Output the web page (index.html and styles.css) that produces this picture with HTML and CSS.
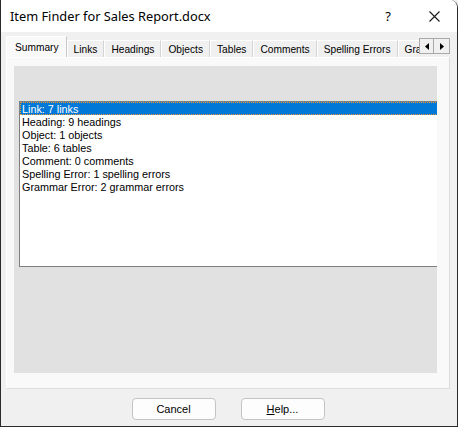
FILE: index.html
```html
<!DOCTYPE html>
<html>
<head>
<meta charset="utf-8">
<link rel="stylesheet" href="styles.css">
</head>
<body>
<div class="window">
  <div class="titlebar">
    <span class="title">Item Finder for Sales Report.docx</span>
    <span class="help-q">?</span>
    <span class="close"><svg width="11" height="11" viewBox="0 0 11 11"><path d="M0.5 0.5 L10.5 10.5 M10.5 0.5 L0.5 10.5" stroke="#1a1a1a" stroke-width="1.1" fill="none"/></svg></span>
  </div>
  <div class="client">
    <div class="tabstrip">
      <div class="tab selected">Summary</div>
      <div class="tab">Links</div>
      <div class="tab">Headings</div>
      <div class="tab">Objects</div>
      <div class="tab">Tables</div>
      <div class="tab">Comments</div>
      <div class="tab">Spelling Errors</div>
      <div class="tab">Grammar Errors</div>
      <div class="scroller">
        <div class="arrow"><svg width="4" height="7" viewBox="0 0 4 7"><path d="M4 0 L0 3.5 L4 7 Z" fill="#000"/></svg></div>
        <div class="arrow"><svg width="4" height="7" viewBox="0 0 4 7"><path d="M0 0 L4 3.5 L0 7 Z" fill="#000"/></svg></div>
      </div>
    </div>
    <div class="page">
      <div class="inner">
        <div class="listbox">
          <div class="row selected">Link: 7 links</div>
          <div class="row">Heading: 9 headings</div>
          <div class="row">Object: 1 objects</div>
          <div class="row">Table: 6 tables</div>
          <div class="row">Comment: 0 comments</div>
          <div class="row">Spelling Error: 1 spelling errors</div>
          <div class="row">Grammar Error: 2 grammar errors</div>
        </div>
      </div>
    </div>
    <div class="buttons">
      <button class="btn">Cancel</button>
      <button class="btn"><u>H</u>elp...</button>
    </div>
  </div>
</div>
</body>
</html>
```
FILE: styles.css
```css
html, body {
  margin: 0;
  padding: 0;
  background: #f0f0f0;
}
.window {
  width: 458px;
  height: 427px;
  box-sizing: border-box;
  border-left: 1px solid #2b2b2b;
  border-right: 1px solid #2b2b2b;
  border-bottom: 1px solid #2b2b2b;
  border-top-right-radius: 8px;
  background: #f0f0f0;
  display: flex;
  flex-direction: column;
  overflow: hidden;
}
.titlebar {
  height: 32px;
  flex: none;
  background: #ffffff;
  display: flex;
  align-items: center;
  font-family: "Noto Sans", sans-serif;
  font-size: 12.8px;
  color: #000;
}
.title {
  padding-left: 9px;
  flex: 1;
}
.help-q {
  width: 20px;
  text-align: center;
  margin-right: 31px;
  font-size: 13px;
}
.close {
  display: flex;
  margin-right: 17px;
}
.client {
  flex: 1;
  display: flex;
  flex-direction: column;
  padding: 4px 7px 0 5px;
  font-family: "Liberation Sans", Arial, sans-serif;
  font-size: 11px;
  color: #000;
}
.tabstrip {
  position: relative;
  height: 21px;
  display: flex;
  align-items: flex-end;
  overflow: hidden;
  flex: none;
}
.tab {
  height: 17px;
  box-sizing: border-box;
  padding: 2px 6px 0 6px;
  border-top: 1px solid #ffffff;
  border-left: 1px solid #ffffff;
  border-right: 1px solid #d4d4d4;
  background: #f0f0f0;
  white-space: nowrap;
  flex: none;
  line-height: 13px;
  font-size: 10.2px;
}
.tab.selected {
  height: 21px;
  padding: 4px 7px 0 8px;
  background: #f9f9f9;
  border-right: 1px solid #c8c8c8;
  position: relative;
  z-index: 1;
}
.scroller {
  position: absolute;
  right: 0;
  top: 2px;
  display: flex;
  z-index: 2;
}
.arrow {
  width: 15px;
  height: 16px;
  box-sizing: border-box;
  border: 1px solid #a9a9a9;
  background: #f0f0f0;
  display: flex;
  align-items: center;
  justify-content: center;
}
.arrow + .arrow {
  border-left: none;
  width: 16px;
}
.page {
  height: 332px;
  flex: none;
  box-sizing: border-box;
  background: #f9f9f9;
  border-left: 1px solid #ffffff;
  border-top: 1px solid #ffffff;
  border-right: 1px solid #dcdcdc;
  border-bottom: 1px solid #dcdcdc;
  padding: 8px 12px 15px 7px;
  display: flex;
}
.inner {
  flex: 1;
  background: #e1e1e1;
  overflow: hidden;
  padding: 35px 0 0 5px;
}
.listbox {
  width: 440px;
  height: 166px;
  box-sizing: border-box;
  background: #ffffff;
  border: 1px solid #7f7f7f;
  padding-top: 0;
  font-size: 10.8px;
}
.row {
  height: 13px;
  line-height: 14px;
  padding-left: 2px;
  white-space: nowrap;
}
.row.selected {
  background: #0078d7;
  color: #ffffff;
  outline: 1px dotted #f39a2f;
  outline-offset: -1px;
}
.buttons {
  flex: 1;
  display: flex;
  justify-content: center;
  align-items: flex-start;
  gap: 25px;
  padding-top: 9px;
}
.btn {
  width: 84px;
  height: 22px;
  box-sizing: border-box;
  background: #fdfdfd;
  border: 1px solid #c4c4c4;
  border-radius: 4px;
  font-family: "Liberation Sans", Arial, sans-serif;
  font-size: 11px;
  color: #000;
  padding: 0;
}
```
